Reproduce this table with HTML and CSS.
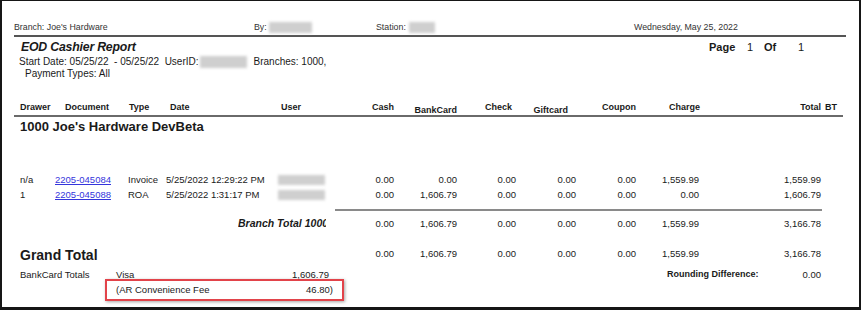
FILE: index.html
```html
<!DOCTYPE html>
<html>
<head>
<meta charset="utf-8">
<link rel="stylesheet" href="styles.css">
</head>
<body>
<div class="frame">
  <div class="pagehead">
    <span>Branch: Joe's Hardware</span>
    <span class="withblur">By:<span class="blur blur-by"></span></span>
    <span class="withblur">Station:<span class="blur blur-st"></span></span>
    <span>Wednesday, May 25, 2022</span>
  </div>
  <div class="rule-top"></div>

  <div class="titlebar">
    <span class="title">EOD Cashier Report</span>
    <span class="page"><b class="pg-word">Page</b><span class="pg-num">1</span><b class="pg-of">Of</b><span>1</span></span>
  </div>
  <div class="meta"><span class="pre">Start Date: 05/25/22  - 05/25/22  UserID:</span><span class="blur blur-uid"></span><span class="branches">Branches: 1000,</span></div>
  <div class="meta paytypes">Payment Types: All</div>

  <div class="row thead">
    <span>Drawer</span>
    <span class="h-doc">Document</span>
    <span class="h-type">Type</span>
    <span class="h-date">Date</span>
    <span class="h-user">User</span>
    <span class="num">Cash</span>
    <span class="num low">BankCard</span>
    <span class="num h-check">Check</span>
    <span class="num low h-gift">Giftcard</span>
    <span class="num">Coupon</span>
    <span class="num">Charge</span>
    <span class="num">Total</span>
    <span class="h-bt">BT</span>
  </div>
  <div class="rule-mid"></div>

  <div class="branchname">1000 Joe's Hardware DevBeta</div>

  <div class="row data first">
    <span>n/a</span>
    <span><a class="doc">2205-045084</a></span>
    <span>Invoice</span>
    <span>5/25/2022 12:29:22 PM</span>
    <span class="usercell"><span class="blur blur-user"></span></span>
    <span class="num">0.00</span>
    <span class="num">0.00</span>
    <span class="num">0.00</span>
    <span class="num">0.00</span>
    <span class="num">0.00</span>
    <span class="num charge">1,559.99</span>
    <span class="num">1,559.99</span>
    <span></span>
  </div>
  <div class="row data">
    <span>1</span>
    <span><a class="doc">2205-045088</a></span>
    <span>ROA</span>
    <span>5/25/2022 1:31:17 PM</span>
    <span class="usercell"><span class="blur blur-user"></span></span>
    <span class="num">0.00</span>
    <span class="num">1,606.79</span>
    <span class="num">0.00</span>
    <span class="num">0.00</span>
    <span class="num">0.00</span>
    <span class="num charge">0.00</span>
    <span class="num">1,606.79</span>
    <span></span>
  </div>
  <div class="rule-sub"></div>

  <div class="row data sub">
    <span class="subtitle"><span class="clip">Branch Total 1000</span></span>
    <span class="num">0.00</span>
    <span class="num">1,606.79</span>
    <span class="num">0.00</span>
    <span class="num">0.00</span>
    <span class="num">0.00</span>
    <span class="num charge">1,559.99</span>
    <span class="num">3,166.78</span>
    <span></span>
  </div>

  <div class="row data grand">
    <span class="grandtitle">Grand Total</span>
    <span class="num">0.00</span>
    <span class="num">1,606.79</span>
    <span class="num">0.00</span>
    <span class="num">0.00</span>
    <span class="num">0.00</span>
    <span class="num charge">1,559.99</span>
    <span class="num">3,166.78</span>
    <span></span>
  </div>

  <div class="row data bank">
    <span class="banktotals">
      <span>BankCard Totals</span>
      <span class="cardline"><span>Visa</span><span>1,606.79</span></span>
    </span>
    <span class="rounding">Rounding Difference:</span>
    <span class="num">0.00</span>
    <span></span>
  </div>

  <div class="feebox"><span>(AR Convenience Fee</span><span>46.80)</span></div>
</div>
</body>
</html>
```

FILE: styles.css
```css
body {
  margin: 0;
  background: #ffffff;
  font-family: "Liberation Sans", Arial, sans-serif;
  color: #1a1a1a;
}

.frame {
  width: 861px;
  height: 310px;
  box-sizing: border-box;
  border-style: solid;
  border-color: #161616;
  border-width: 1px 2px 3px 2px;
  padding: 20px 13px 0 12px;
  overflow: hidden;
  background: #ffffff;
}

.pagehead {
  display: grid;
  grid-template-columns: 240px 122px 258px auto;
  height: 12px;
  line-height: 12px;
  font-size: 8.8px;
  color: #333333;
  white-space: nowrap;
}

.withblur {
  display: flex;
  align-items: center;
}

.blur {
  display: inline-block;
  background: #cfcfcf;
  filter: blur(1.6px);
}

.blur-by {
  width: 43px;
  height: 11px;
  margin-left: 2px;
}

.blur-st {
  width: 26px;
  height: 11px;
  margin-left: 3px;
}

.rule-top {
  height: 2px;
  background: #555555;
  margin-top: 2px;
}

.titlebar {
  display: grid;
  grid-template-columns: 695px auto;
  margin-top: 3px;
  height: 14px;
  line-height: 14px;
  white-space: nowrap;
}

.title {
  font-style: italic;
  font-weight: bold;
  font-size: 12.3px;
  margin-left: 7px;
  letter-spacing: -0.2px;
}

.page {
  font-size: 11px;
  display: flex;
}

.pg-word {
  width: 38px;
}

.pg-num {
  width: 17px;
}

.pg-of {
  width: 34px;
}

.meta {
  font-size: 10px;
  line-height: 12px;
  margin: 2px 0 0 5px;
  display: flex;
  align-items: center;
  white-space: nowrap;
}

.pre {
  white-space: pre;
}

.blur-uid {
  width: 47px;
  height: 12px;
  margin-left: 1px;
}

.branches {
  margin-left: 7px;
}

.paytypes {
  margin: 0 0 0 11px;
}

.row {
  display: grid;
  grid-template-columns: 35px 73px 38px 112px 67px 49px 63px 59px 60px 60px 64px 121px 24px;
  margin-left: 6px;
  white-space: nowrap;
}

.num {
  text-align: right;
}

.thead {
  margin-top: 21px;
  font-weight: bold;
  font-size: 9px;
  line-height: 12px;
  height: 12px;
  grid-template-rows: 12px;
  align-items: start;
}

.thead .low {
  padding-top: 3px;
}

.h-doc {
  padding-left: 10px;
}

.h-type {
  padding-left: 1px;
}

.h-date {
  padding-left: 4px;
}

.h-user {
  padding-left: 3px;
}

.h-check {
  padding-right: 4px;
}

.h-gift {
  padding-right: 8px;
}

.h-bt {
  padding-left: 4px;
}

.rule-mid {
  height: 2px;
  background: #6a6a6a;
  margin: 2px 3px 0 0;
}

.branchname {
  font-weight: bold;
  font-size: 13px;
  line-height: 16px;
  margin: 2px 0 0 6px;
}

.data {
  font-size: 9.5px;
  line-height: 15px;
  height: 15px;
  grid-template-rows: 15px;
  align-items: center;
}

.data.first {
  margin-top: 37px;
}

.doc {
  color: #3535dc;
  text-decoration: underline;
}

.usercell {
  display: flex;
  align-items: center;
}

.blur-user {
  width: 47px;
  height: 10px;
}

.charge {
  padding-right: 1px;
}

.rule-sub {
  height: 2px;
  width: 487px;
  background: #8a8a8a;
  margin: 7px 0 0 321px;
}

.sub {
  margin-top: 5px;
}

.subtitle {
  grid-column: 1 / 6;
  font-style: italic;
  font-weight: bold;
  font-size: 10.5px;
}

.clip {
  display: block;
  margin-left: 218px;
  width: 88px;
  overflow: hidden;
}

.grand {
  margin-top: 15px;
  height: 18px;
  grid-template-rows: 18px;
  align-items: start;
}

.grandtitle {
  grid-column: 1 / 6;
  font-weight: bold;
  font-size: 14px;
  line-height: 18px;
}

.grand .num {
  line-height: 15px;
}

.bank {
  margin-top: 4px;
  line-height: 13px;
  height: 13px;
  grid-template-rows: 13px;
}

.banktotals {
  grid-column: 1 / 11;
  display: grid;
  grid-template-columns: 96px 213px;
}

.cardline {
  display: flex;
  justify-content: space-between;
}

.rounding {
  font-weight: bold;
  font-size: 9px;
  padding-left: 31px;
}

.feebox {
  margin: -2px 0 0 91px;
  width: 239px;
  height: 22px;
  box-sizing: border-box;
  border: 2px solid #e2434a;
  box-shadow: 1px 1px 3px rgba(0, 0, 0, 0.35);
  display: flex;
  justify-content: space-between;
  padding: 0 9px;
  font-size: 9.5px;
  line-height: 18px;
}
```
